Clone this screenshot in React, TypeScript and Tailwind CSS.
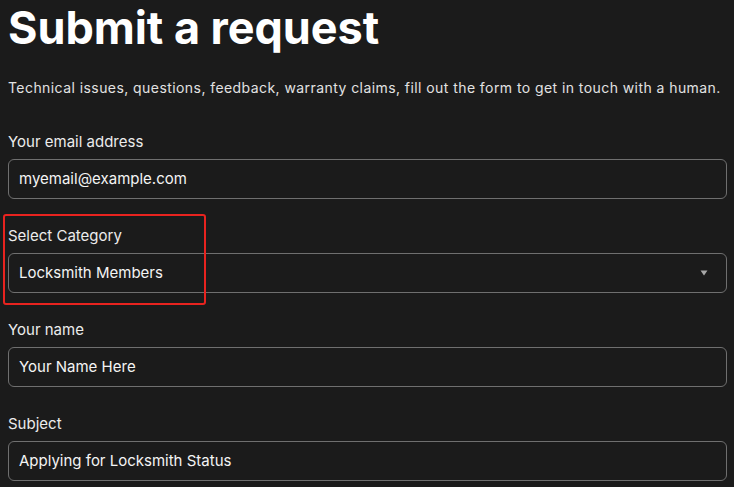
import React from "react";

const fields = [
  { label: "Your email address", value: "myemail@example.com" },
  { label: "Select Category", value: "Locksmith Members", select: true, marked: true },
  { label: "Your name", value: "Your Name Here" },
  { label: "Subject", value: "Applying for Locksmith Status" },
];

const Field = ({ label, value, select, marked }: { label: string; value: string; select?: boolean; marked?: boolean }) => (
  <div className="relative mb-[27px]">
    {marked && (
      <div className="absolute -left-[5px] -top-[12px] h-[91px] w-[203px] rounded-[3px] border-2 border-[#e8231f]" />
    )}
    <div className="text-[15px] leading-[20px] text-[#ececec]">{label}</div>
    <div className="mt-[7px] flex h-10 items-center justify-between rounded-[6px] border border-[#6f6f6f] px-[10px] text-[15px] text-[#f4f4f4]">
      <span>{value}</span>
      {select && (
        <svg width="8" height="6" viewBox="0 0 8 6" className="mr-[8px]">
          <path d="M0.5 0.5h7L4 5.5z" fill="#a8a8a8" />
        </svg>
      )}
    </div>
  </div>
);

export default function App() {
  return (
    <div className="min-h-screen bg-[#1b1b1b] px-2 font-['Inter',sans-serif] text-white">
      <h1 className="pt-[3px] text-[45px] font-bold leading-[50px] tracking-[-0.05px]">Submit a request</h1>
      <p className="mt-[25px] text-[14px] leading-5 tracking-[0.43px] text-[#e2e2e2]">
        Technical issues, questions, feedback, warranty claims, fill out the form to get in touch with a human.
      </p>
      <div className="mt-[34px] w-[719px]">
        {fields.map((f) => (
          <Field key={f.label} {...f} />
        ))}
      </div>
    </div>
  );
}
